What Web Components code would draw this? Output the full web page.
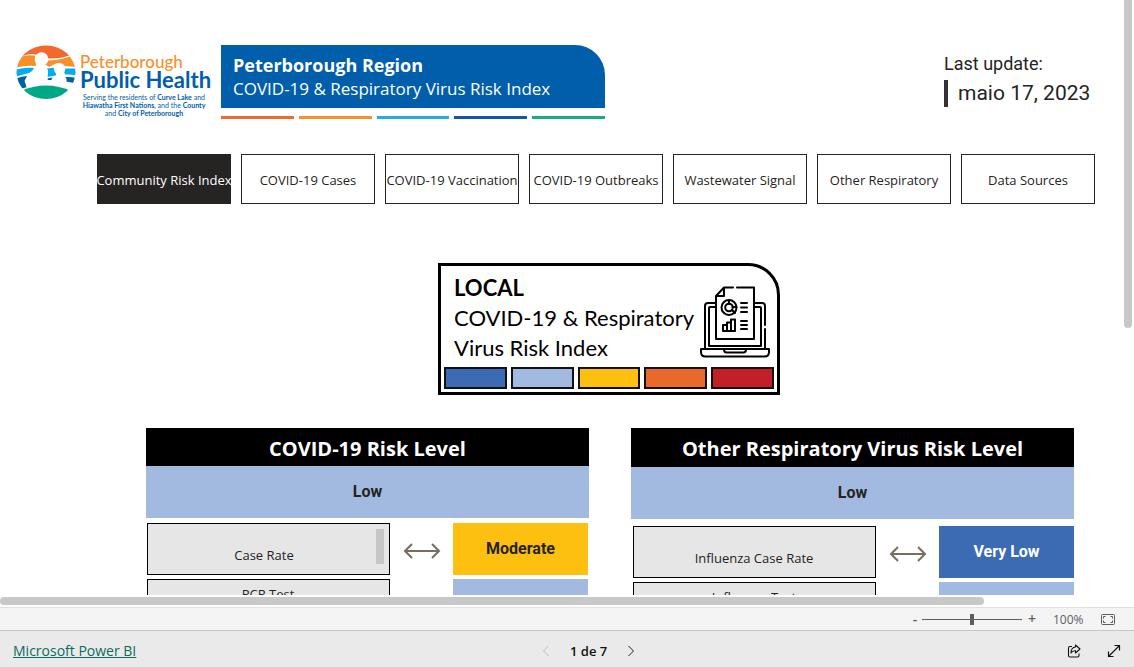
<!DOCTYPE html>
<html lang="en">
<head>
<meta charset="utf-8">
<title>COVID-19 &amp; Respiratory Virus Risk Index</title>
<style>
html, body { margin: 0; height: 100%; }
body { font-family: "Open Sans", "Noto Sans", sans-serif; color: #252423; background: #fff; overflow: hidden; }
</style>
</head>
<body>
<report-app></report-app>

<template id="report-app">
<style>
:host { display: flex; flex-direction: column; height: 100vh; }
.view { flex: 1; min-height: 0; display: grid; grid-template-columns: 1fr 10px; grid-template-rows: 1fr 12px; }
.page { overflow: hidden; min-height: 0; }
header { display: flex; align-items: flex-start; padding: 45px 34px 0 16px; }
title-banner { margin-left: 10px; }
last-update { margin-left: auto; }
nav { display: flex; gap: 10px; margin: 35px 29px 0 97px; }
index-card { margin: 59px auto 0; }
.center { display: flex; padding-left: 94px; }
.panels { display: flex; gap: 42px; margin: 33px 50px 0 146px; }
risk-panel { flex: 1; }
.vbar { display: block; width: 8px; height: 328px; background: #c8c8c8; border-radius: 0 0 4px 4px; }
.hbar { display: block; width: 984px; max-width: 90%; height: 8px; margin-top: 2px; background: #c8c8c8; border-radius: 4px; }
</style>
<div class="view">
  <main class="page">
    <header>
      <health-logo></health-logo>
      <title-banner><span slot="region">Peterborough Region</span>COVID-19 &amp; Respiratory Virus Risk Index</title-banner>
      <last-update><span slot="label">Last update:</span>maio 17, 2023</last-update>
    </header>
    <nav>
      <page-tab active>Community Risk Index</page-tab>
      <page-tab>COVID-19 Cases</page-tab>
      <page-tab>COVID-19 Vaccination</page-tab>
      <page-tab>COVID-19 Outbreaks</page-tab>
      <page-tab>Wastewater Signal</page-tab>
      <page-tab>Other Respiratory</page-tab>
      <page-tab>Data Sources</page-tab>
    </nav>
    <div class="center"><index-card></index-card></div>
    <div class="panels">
      <risk-panel style="--head:38px;--gap:5px;--left:1px;--right:1px">
        <span slot="title">COVID-19 Risk Level</span><span slot="level">Low</span>
        <risk-row scroll style="--level:#fdc010"><span slot="value">Moderate</span>Case Rate</risk-row>
        <risk-row tall style="--level:#a3bae0">PCR Test</risk-row>
      </risk-panel>
      <risk-panel style="--head:39px;--gap:7px;--left:2px;--right:0px">
        <span slot="title">Other Respiratory Virus Risk Level</span><span slot="level">Low</span>
        <risk-row style="--level:#3c6bb4;--ink:#fff"><span slot="value">Very Low</span>Influenza Case Rate</risk-row>
        <risk-row tall style="--level:#a3bae0">Influenza Test</risk-row>
      </risk-panel>
    </div>
  </main>
  <span class="vbar"></span>
  <span class="hbar"></span>
</div>
<zoom-bar></zoom-bar>
<report-footer></report-footer>
</template>

<template id="health-logo">
<style>
:host { display: flex; gap: 4px; color: #005eaa; width: 195px; font-family: Lato, sans-serif; }
svg { flex: none; }
.t { display: flex; flex-direction: column; align-items: flex-start; white-space: nowrap; margin-top: 7px; }
.a { color: #f7902a; font-size: 17px; line-height: 19px; font-weight: 500; }
.b { font-size: 22px; line-height: 18px; font-weight: 700; }
small { font-size: 7px; line-height: 8px; margin-top: 4px; text-align: center; width: 128px; }
</style>
<svg width="60" height="55" viewBox="0 0 60 55" role="img" aria-label="Peterborough Public Health">
  <clipPath id="c"><ellipse cx="30" cy="27.2" rx="29.5" ry="26.8"/></clipPath>
  <g clip-path="url(#c)">
    <path fill="#f1692c" d="M0 0h60v8q-14 6-27 5.500L17 9q-5-.5-10 2z"/>
    <path fill="#f7902a" d="M0 22.500V14q8-5 19-3.500l1 10.500Q10 20 0 22.500zM32 15.500Q47 15 60 9v13l-11-1-8-3-8 4-4-3z"/>
    <path fill="#00aeef" d="M0 24.500q9-2.500 18-1.500-1 3-5 5L0 31.500zM31 23.500l9-1v8l-9 1.500zM47 23.500h13v7q-6-1.500-11-1z"/>
    <path fill="#005eaa" d="M0 33.500q6-2.500 11-2.500L8.500 36l2.500 6-6 2zM31 33.500q5-1.500 10-1l-4 3.500h-5zM49 32q6-.5 11 1l-2 5-8-1.500z"/>
    <g fill="#fff">
      <circle cx="25.500" cy="14" r="6.800"/><circle cx="43.600" cy="23.800" r="5.800"/>
      <path d="M21.500 18h8q-1 3 1 4.500 2 2 1.500 5.500l-.5 7h4q0-3 3.500-3.500l2-3.500h5q0 3 3 4 2 1 1.500 5l5 2-2 5H11l-1.500-6q0-6 4.500-8 4.500-1 5-5 2-1 2.500-7z"/>
    </g>
    <path fill="#00a887" d="M5 46q12-5.500 25-5.500T55 46l-5 11H10z"/>
  </g>
</svg>
<div class="t"><span class="a">Peterborough</span><span class="b">Public Health</span>
<small>Serving the residents of <b>Curve Lake</b> and<br><b>Hiawatha First Nations</b>, and the <b>County</b><br>and <b>City of Peterborough</b></small></div>
</template>

<template id="title-banner">
<style>
:host { display: block; width: 384px; }
.box { height: 63px; box-sizing: border-box; background: #005eaa; color: #fff; border-radius: 0 30px 0 0; padding: 8px 12px 0; font-size: 17px; line-height: 24px; white-space: nowrap; }
.r { font-size: 18px; font-weight: 700; }
.bars { display: grid; grid-template-columns: repeat(5, 1fr); gap: 5px; margin-top: 8px; }
.bars i { height: 3px; }
</style>
<div class="box"><div class="r"><slot name="region"></slot></div><div><slot></slot></div></div>
<div class="bars"><i style="background:#f1692c"></i><i style="background:#f7902a"></i><i style="background:#29abe2"></i><i style="background:#0f5aa8"></i><i style="background:#1caa85"></i></div>
</template>

<template id="last-update">
<style>
:host { display: block; font-family: Roboto, sans-serif; color: #252423; width: 146px; white-space: nowrap; margin-top: 7px; }
.l { font-size: 18px; line-height: 24px; }
.d { margin-top: 4px; border-left: 4px solid #333; padding-left: 10px; font-size: 21px; line-height: 27px; }
</style>
<div class="l"><slot name="label"></slot></div><div class="d"><slot></slot></div>
</template>

<template id="page-tab">
<style>
:host { display: block; flex: 1 1 0; min-width: 0; }
button { width: 100%; height: 50px; padding: 2px 0 0; border: 1px solid #252423; background: #fff; color: #252423; font: 13px "Open Sans", sans-serif; white-space: nowrap; display: flex; align-items: center; justify-content: center; }
:host([active]) button { background: #252423; color: #fff; }
</style>
<button type="button"><slot></slot></button>
</template>

<template id="index-card">
<style>
:host { display: block; box-sizing: border-box; width: 342px; border: 3px solid #000; border-radius: 0 32px 0 0; padding: 7px 3px 3px; font-family: Lato, sans-serif; color: #000; }
.top { display: flex; justify-content: space-between; height: 94px; }
.text { font-size: 22px; line-height: 30px; padding-left: 10px; white-space: nowrap; }
.text b, .text span { display: block; }
svg { flex: none; margin: 12px 3px 0 0; }
.scale { display: grid; grid-template-columns: repeat(5, 1fr); gap: 4px; }
.scale i { border: 2px solid #111; height: 18px; }
</style>
<div class="top">
  <div class="text"><b>LOCAL</b><span>COVID-19 &amp; Respiratory</span><span>Virus Risk Index</span></div>
  <svg width="72" height="74" viewBox="9 10 72 74" fill="none" stroke="#000" stroke-width="2" stroke-linecap="round" stroke-linejoin="round" aria-hidden="true">
    <path d="M26 28h-8q-3 0-3 3v42M64 28h8q3 0 3 3v19M75 54v19M26 32h-6q-1 0-1 1v38h52V33q0-1-1-1h-6"/>
    <path d="M11 74h68v3q0 4.500-4.500 4.500h-59q-4.500 0-4.500-4.500zM34 74.500q0 3 2.500 3h17q2.500 0 2.500-3"/>
    <path d="M43 12.500h-9L26 21v43h38V12.500H47M34 12.500V21h-8"/>
    <circle cx="39" cy="32.500" r="7.500"/><circle cx="39" cy="32.500" r="3.800"/>
    <path d="M39 25v3.700M42 35l3 3M42.500 32h4M51 28h6M51 32.500h6M51 37h6M51 46h6M51 50h6M51 54h6"/>
    <path d="M33 50h4v6h-4zM37 47.500h4V56h-4zM41 44.500h4V56h-4z"/>
  </svg>
</div>
<div class="scale"><i style="background:#3c6bb4"></i><i style="background:#a3bae0"></i><i style="background:#fdc010"></i><i style="background:#e8692a"></i><i style="background:#c21f26"></i></div>
</template>

<template id="risk-panel">
<style>
:host { display: block; }
h2 { margin: 0; height: var(--head); line-height: 42px; background: #000; color: #fff; text-align: center; font-size: 20px; font-weight: 700; white-space: nowrap; }
.level { height: 52px; background: #a3bae0; text-align: center; font: 700 16px/52px Roboto, sans-serif; }
.rows { display: flex; flex-direction: column; gap: 4px; margin: var(--gap) var(--right) 0 var(--left); }
</style>
<h2><slot name="title"></slot></h2>
<div class="level"><slot name="level"></slot></div>
<div class="rows"><slot></slot></div>
</template>

<template id="risk-row">
<style>
:host { display: flex; justify-content: space-between; align-items: center; height: 52px; }
.name { flex: 0 0 243px; height: 52px; box-sizing: border-box; border: 1px solid #000; background: #e6e6e6; display: flex; align-items: flex-start; padding: 5px 5px 0 0; }
.name span { flex: 1; text-align: center; font-size: 13px; line-height: 16px; padding: 18px 0 0 4px; }
.name i { display: none; width: 8px; height: 35px; background: #c6c6c6; }
svg { margin-top: 4px; }
:host([scroll]) .name i { display: block; }
:host([tall]) .name span { padding-top: 1px; }
:host([tall]) svg { visibility: hidden; }
.value { flex: 0 0 135px; height: 52px; background: var(--level); color: var(--ink, #252423); text-align: center; font: 700 16px/52px Roboto, sans-serif; }
</style>
<div class="name"><span><slot></slot></span><i></i></div>
<svg width="38" height="16" viewBox="0 0 38 16" fill="none" stroke="#796c60" stroke-width="2" aria-hidden="true"><path d="M1.500 8h35M9 1L2 8l7 7M29 1l7 7-7 7"/></svg>
<div class="value"><slot name="value"></slot></div>
</template>

<template id="zoom-bar">
<style>
:host { display: flex; align-items: center; justify-content: flex-end; height: 22px; padding-right: 19px; background: #f4f4f4; border-top: 1px solid #e1e1e1; border-bottom: 1px solid #c6c6c6; color: #605e5c; }
button { border: 0; background: none; padding: 0; color: inherit; font: 600 14px/20px "Open Sans", sans-serif; width: 14px; height: 22px; display: flex; align-items: center; justify-content: center; }
input { appearance: none; width: 100px; height: 12px; margin: 0 3px 0 0; background: linear-gradient(#605e5c, #605e5c) center / 100% 1px no-repeat; }
input::-webkit-slider-thumb { appearance: none; width: 4px; height: 11px; background: #605e5c; }
output { font-size: 12px; width: 30px; margin: 0 18px 0 14px; }
</style>
<button type="button" aria-label="Zoom out">-</button>
<input type="range" min="0" max="100" value="50" aria-label="Zoom">
<button type="button" aria-label="Zoom in">+</button>
<output>100%</output>
<button type="button" aria-label="Fit to page"><svg width="14" height="11" viewBox="0 0 14 11" fill="none" stroke="#605e5c"><rect x=".5" y=".5" width="13" height="10" rx="1"/><path d="M2.500 4.500v-2h2M9.500 2.500h2v2M11.500 6.500v2h-2M4.500 8.500h-2v-2"/></svg></button>
</template>

<template id="report-footer">
<style>
:host { display: flex; align-items: center; justify-content: space-between; height: 36px; padding: 4px 13px 0; box-sizing: border-box; background: #eaeaea; color: #111; }
a { color: #0d6a5e; font-size: 14px; line-height: 18px; }
div { display: flex; align-items: center; }
button { border: 0; background: none; padding: 0; display: flex; align-items: center; justify-content: center; height: 18px; width: 14px; }
.pager { gap: 17px; font-size: 13px; line-height: 18px; font-weight: 600; }
.tools { gap: 26px; padding-left: 26px; }
</style>
<a href="#">Microsoft Power BI</a>
<div class="pager">
  <button type="button" aria-label="Previous page"><svg width="8" height="12" viewBox="0 0 8 12" fill="none" stroke="#bdbdbd"><path d="M6.500 1L1.500 6l5 5"/></svg></button>
  <span>1 de 7</span>
  <button type="button" aria-label="Next page"><svg width="8" height="12" viewBox="0 0 8 12" fill="none" stroke="#222"><path d="M1.500 1l5 5-5 5"/></svg></button>
</div>
<div class="tools">
  <button type="button" aria-label="Share"><svg width="14" height="14" viewBox="0 0 14 14" fill="none" stroke="#111" stroke-width="1.100" stroke-linejoin="round"><path d="M5 2.500H3Q1.500 2.500 1.500 4v7.500Q1.500 13 3 13h7.500q1.500 0 1.500-1.500V9.500M8.500 1l4.500 4-4.500 4V6.800Q5.500 6.500 4 9q0-5.500 4.500-6z"/></svg></button>
  <button type="button" aria-label="Full screen"><svg width="14" height="14" viewBox="0 0 14 14" fill="none" stroke="#111" stroke-width="1.200"><path d="M1.500 12.500l11-11M7.500 1.500h5v5M1.500 7.500v5h5"/></svg></button>
</div>
</template>

<script>
for (const name of ['health-logo', 'title-banner', 'last-update', 'page-tab', 'index-card', 'risk-row', 'risk-panel', 'zoom-bar', 'report-footer', 'report-app']) {
  customElements.define(name, class extends HTMLElement {
    constructor() {
      super();
      this.attachShadow({ mode: 'open' }).append(document.getElementById(name).content.cloneNode(true));
    }
  });
}
</script>
</body>
</html>
